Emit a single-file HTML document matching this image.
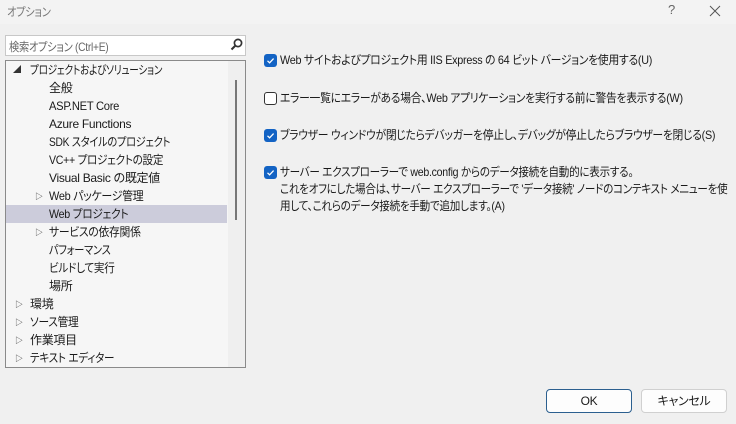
<!DOCTYPE html>
<html><head><meta charset="utf-8"><style>
*{margin:0;padding:0;box-sizing:border-box}
body{width:736px;height:424px;background:#f0f0f0;font-family:"Liberation Sans","Noto Sans CJK JP",sans-serif;font-size:12px;color:#1a1a1a;position:relative;overflow:hidden;font-feature-settings:"palt";letter-spacing:-0.3px}
.a{position:absolute;white-space:nowrap}
.title{left:0;top:0;width:736px;height:24px;background:#f3f3f3}
.tree{left:5px;top:60px;width:241px;height:308px;border:1px solid #8a8a8a;background:#f6f6f6}
.sb{position:absolute;right:0;top:0;width:17px;height:306px;background:#efefef}
.r{position:absolute;height:18px;line-height:18px;font-size:12px;white-space:nowrap;transform-origin:0 50%}
.tri{position:absolute;font-size:8px;color:#333}
.cb{position:absolute;width:13px;height:13px;border-radius:3px}
.off{border:1px solid #333;background:#fff}
.t{position:absolute;left:280px;font-size:12px;line-height:17px;white-space:nowrap;transform:scaleX(.9);transform-origin:0 0}
.btn{position:absolute;top:389px;width:86px;height:24px;border-radius:4px;background:#fdfdfd;border:1px solid #d0d0d0;text-align:center;line-height:22px;font-size:12px}
</style></head><body>
<div class="a title"></div>
<div class="a" style="left:7px;top:3px;font-size:12px;color:#777;transform:scaleX(.85);transform-origin:0 0">オプション</div>
<div class="a" style="left:668px;top:2px;font-size:13px;color:#666">?</div>
<svg class="a" style="left:709px;top:5px" width="12" height="12"><path d="M1 1L11 11M11 1L1 11" stroke="#555" stroke-width="1"/></svg>
<div class="a" style="left:5px;top:35px;width:241px;height:21px;border:1px solid #c8c8c8;background:#fff"></div>
<div class="a" style="left:9px;top:38px;color:#666;transform:scaleX(.85);transform-origin:0 0">検索オプション (Ctrl+E)</div>
<svg class="a" style="left:230px;top:38px" width="13" height="13"><circle cx="8" cy="5" r="3.6" fill="none" stroke="#333" stroke-width="1.7"/><path d="M5.5 7.5L1.5 11.5" stroke="#333" stroke-width="2"/></svg>
<div class="a tree">
<div class="sb"><div style="position:absolute;left:7px;top:19px;width:2px;height:140px;background:#777"></div></div>
<div style="position:absolute;left:0;top:144px;width:221px;height:18px;background:#ccccdb"></div>
<span class="tri" style="left:7px;top:3px">◢</span><div class="r" style="left:24px;top:0;transform:scaleX(.8)">プロジェクトおよびソリューション</div>
<div class="r" style="left:43px;top:18px">全般</div>
<div class="r" style="left:43px;top:36px;transform:scaleX(.93)">ASP.NET Core</div>
<div class="r" style="left:43px;top:54px">Azure Functions</div>
<div class="r" style="left:43px;top:72px;transform:scaleX(.85)">SDK スタイルのプロジェクト</div>
<div class="r" style="left:43px;top:90px;transform:scaleX(.88)">VC++ プロジェクトの設定</div>
<div class="r" style="left:43px;top:108px">Visual Basic の既定値</div>
<span class="tri" style="left:29px;top:130px">▷</span><div class="r" style="left:43px;top:126px;transform:scaleX(.91)">Web パッケージ管理</div>
<div class="r" style="left:43px;top:144px;transform:scaleX(.89)">Web プロジェクト</div>
<span class="tri" style="left:29px;top:166px">▷</span><div class="r" style="left:43px;top:162px;transform:scaleX(.9)">サービスの依存関係</div>
<div class="r" style="left:43px;top:180px;transform:scaleX(.85)">パフォーマンス</div>
<div class="r" style="left:43px;top:198px;transform:scaleX(.88)">ビルドして実行</div>
<div class="r" style="left:43px;top:216px">場所</div>
<span class="tri" style="left:9px;top:238px">▷</span><div class="r" style="left:24px;top:234px">環境</div>
<span class="tri" style="left:9px;top:256px">▷</span><div class="r" style="left:24px;top:252px;transform:scaleX(.89)">ソース管理</div>
<span class="tri" style="left:9px;top:274px">▷</span><div class="r" style="left:24px;top:270px">作業項目</div>
<span class="tri" style="left:9px;top:292px">▷</span><div class="r" style="left:24px;top:288px;transform:scaleX(.88)">テキスト エディター</div>
</div>

<svg class="a" style="left:264px;top:54px" width="13" height="13"><rect width="13" height="13" rx="3" fill="#1363c4"/><path d="M3.5 6.8L5.6 8.8L9.6 4.6" stroke="#fff" stroke-width="1.3" fill="none"/></svg>
<div class="t" style="top:52px">Web サイトおよびプロジェクト用 IIS Express の 64 ビット バージョンを使用する(U)</div>
<div class="cb off" style="left:264px;top:92px"></div>
<div class="t" style="top:90px">エラー一覧にエラーがある場合、Web アプリケーションを実行する前に警告を表示する(W)</div>
<svg class="a" style="left:264px;top:129px" width="13" height="13"><rect width="13" height="13" rx="3" fill="#1363c4"/><path d="M3.5 6.8L5.6 8.8L9.6 4.6" stroke="#fff" stroke-width="1.3" fill="none"/></svg>
<div class="t" style="top:127px">ブラウザー ウィンドウが閉じたらデバッガーを停止し、デバッグが停止したらブラウザーを閉じる(S)</div>
<svg class="a" style="left:264px;top:166px" width="13" height="13"><rect width="13" height="13" rx="3" fill="#1363c4"/><path d="M3.5 6.8L5.6 8.8L9.6 4.6" stroke="#fff" stroke-width="1.3" fill="none"/></svg>
<div class="t" style="top:164px;transform:scaleX(.88)">サーバー エクスプローラーで web.config からのデータ接続を自動的に表示する。<br>これをオフにした場合は、サーバー エクスプローラーで 'データ接続' ノードのコンテキスト メニューを使<br>用して、これらのデータ接続を手動で追加します。(A)</div>

<div class="btn" style="left:546px;border:1px solid #2b5f8f">OK</div>
<div class="btn" style="left:641px">キャンセル</div>
</body></html>
